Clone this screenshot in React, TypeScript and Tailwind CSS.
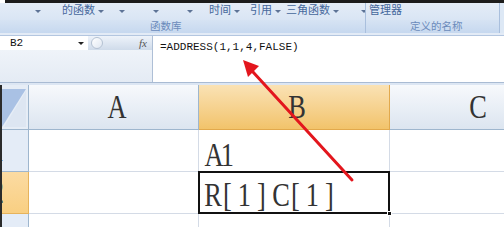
import React from 'react';

// dropdown caret used in the ribbon and the name box
function Caret({ className = '' }: { className?: string }) {
  return (
    <span
      className={`inline-block shrink-0 w-0 h-0 border-l-[3px] border-r-[3px] border-t-[3px] border-l-transparent border-r-transparent border-t-[#5d7396] ${className}`}
    />
  );
}

// tall, narrow serif glyphs on a fixed pitch (the sheet uses a CJK font for latin text)
function Glyphs({ text }: { text: string }) {
  return (
    <>
      {text.split('').map((c, i) => (
        <span key={i} className="inline-block w-[17px] text-center">
          <span className="inline-block scale-x-[0.8]">{c}</span>
        </span>
      ))}
    </>
  );
}

const cjk = "font-['Noto_Sans_CJK_SC','Noto_Sans',sans-serif]";
const serif = "font-['Liberation_Serif',serif]";
const label = 'shrink-0 whitespace-nowrap -mt-[4px]';

export default function App() {
  return (
    <div className="relative w-[504px] h-[227px] overflow-hidden bg-white">
      {/* window edge */}
      <div className="h-[3px] ml-[5px] bg-[#1c1c1c]" />

      {/* ribbon, formulas tab */}
      <div className={`flex h-[30px] ${cjk} text-[11px] leading-none`}>
        <div className="w-[366px] shrink-0 flex flex-col border-r border-[#a9bfdd] shadow-[1px_0_0_#f4f8fd]">
          <div className="h-[17px] flex items-center overflow-hidden bg-gradient-to-b from-[#e4ecf7] to-[#d9e5f4] text-[#45679b]">
            <Caret className="ml-[35px]" />
            <span className={`ml-[21px] ${label}`}>的函数</span>
            <Caret className="ml-[3px]" />
            <Caret className="ml-[15px]" />
            <Caret className="ml-[28px]" />
            <Caret className="ml-[28px]" />
            <span className={`ml-[16px] ${label}`}>时间</span>
            <Caret className="ml-[3px]" />
            <span className={`ml-[10px] ${label}`}>引用</span>
            <Caret className="ml-[3px]" />
            <span className={`ml-[5px] ${label}`}>三角函数</span>
            <Caret className="ml-[3px]" />
            <Caret className="ml-[22px]" />
          </div>
          <div className="h-[13px] flex items-center bg-gradient-to-b from-[#d6e3f3] to-[#c6d8ef] text-[#6b8bbb] text-[10.5px]">
            <span className="ml-[150px] whitespace-nowrap">函数库</span>
          </div>
        </div>
        <div className="w-[134px] shrink-0 flex flex-col border-r border-[#a9bfdd]">
          <div className="h-[17px] flex items-center overflow-hidden bg-gradient-to-b from-[#e4ecf7] to-[#d9e5f4] text-[#45679b]">
            <span className={`ml-[3px] ${label}`}>管理器</span>
          </div>
          <div className="h-[13px] flex items-center bg-gradient-to-b from-[#d6e3f3] to-[#c6d8ef] text-[#6b8bbb] text-[10.5px]">
            <span className="ml-[44px] whitespace-nowrap">定义的名称</span>
          </div>
        </div>
        <div className="flex-1 bg-[#dde8f5]" />
      </div>
      <div className="h-[3px] bg-[#e3ebf6] border-b border-[#b3c6e0]" />

      {/* formula bar */}
      <div className="flex h-[46px]">
        <div className="w-[152px] flex flex-col bg-gradient-to-b from-[#f4f7fb] to-[#e4ebf4]">
          <div className="h-[14px] flex">
            <div className="w-[88px] flex items-center bg-white font-['Liberation_Mono',monospace] text-[11px] text-[#111]">
              <span className="ml-[10px]">B2</span>
              <Caret className="ml-auto mr-[4px] border-t-[#222]" />
            </div>
            <div className="flex-1 flex items-center bg-gradient-to-b from-[#eef3fa] to-[#cfdbea]">
              <span className="ml-[3px] w-[12px] h-[12px] rounded-full border border-[#b5c2d3] bg-gradient-to-br from-white to-[#dfe7f2]" />
              <span className={`ml-auto mr-[5px] ${serif} italic text-[11px] text-[#555]`}>fx</span>
            </div>
          </div>
          <div className="flex-1" />
        </div>
        <div className="flex-1 bg-white border-l border-[#aebfd6] pl-[7px] pt-[5px] font-['Liberation_Mono',monospace] text-[11px] leading-[13px] text-[#111] whitespace-nowrap">
          =ADDRESS(1,1,4,FALSE)
        </div>
      </div>
      <div className="h-[3px] bg-[#dce6f3] border-t border-[#a9bbd3]" />

      {/* worksheet */}
      <div className="border-l-2 border-[#2b2b2b] overflow-hidden">
        <div
          className={`-ml-[35px] grid grid-cols-[62px_170px_191px_170px] grid-rows-[45px_42px_42px_42px] ${serif} text-[33px] leading-none text-[#333]`}
        >
          {/* corner */}
          <div className="flex justify-end bg-[#e3eaf4] border-r border-b border-[#9eb6ce]">
            <svg width="27" height="44" viewBox="0 0 27 44">
              <rect x="0" y="0" width="27" height="44" fill="#e6edf6" />
              <polygon points="1,4 25,4 1,42" fill="#a9c1e4" />
              <polygon points="25,6 25,42 3,42" fill="#dde6f2" />
            </svg>
          </div>
          <div className="flex items-center justify-center bg-gradient-to-b from-[#f7f9fc] to-[#dce5f0] border-r border-b border-[#9eb6ce]">
            <Glyphs text="A" />
          </div>
          <div className="flex items-center justify-center bg-gradient-to-b from-[#fae2b4] to-[#f2c36a] border-r border-b border-[#e2a94c]">
            <Glyphs text="B" />
          </div>
          <div className="flex items-center justify-center bg-gradient-to-b from-[#f7f9fc] to-[#dce5f0] border-b border-[#9eb6ce]">
            <Glyphs text="C" />
          </div>

          {/* row 1 */}
          <div className="flex items-center justify-center bg-[#e4ecf7] border-r border-b border-[#9eb6ce]">
            <Glyphs text="1" />
          </div>
          <div className="border-r border-b border-[#d4dbe6]" />
          <div className="pl-[3px] pt-[9px] border-r border-b border-[#d4dbe6]">
            <Glyphs text="A1" />
          </div>
          <div className="border-b border-[#d4dbe6]" />

          {/* row 2 */}
          <div className="flex items-center justify-center bg-gradient-to-b from-[#fbdba2] to-[#f9cf82] border-r border-b border-[#e6b35c]">
            <Glyphs text="2" />
          </div>
          <div className="border-r border-b border-[#d4dbe6]" />
          <div className="relative pl-[3px] pt-[7px] border-r border-b border-[#d4dbe6] whitespace-nowrap">
            <Glyphs text="R[1]C[1]" />
            <div className="absolute -left-[1px] -top-[1px] -right-[1px] -bottom-[1px] border-[2px] border-[#111]" />
            <div className="absolute -right-[3px] -bottom-[3px] w-[5px] h-[5px] bg-[#111] border border-white" />
          </div>
          <div className="border-b border-[#d4dbe6]" />

          {/* row 3 */}
          <div className="flex items-center justify-center bg-[#e4ecf7] border-r border-[#9eb6ce]">
            <Glyphs text="3" />
          </div>
          <div className="border-r border-[#d4dbe6]" />
          <div className="border-r border-[#d4dbe6]" />
          <div />
        </div>
      </div>

      {/* red annotation arrow */}
      <svg className="absolute left-0 top-0 pointer-events-none" width="504" height="227" viewBox="0 0 504 227">
        <line x1="352" y1="180" x2="253" y2="72" stroke="#e3161d" strokeWidth="3" strokeLinecap="round" />
        <polygon points="243,60 259,66 248,77" fill="#e3161d" />
      </svg>
    </div>
  );
}
